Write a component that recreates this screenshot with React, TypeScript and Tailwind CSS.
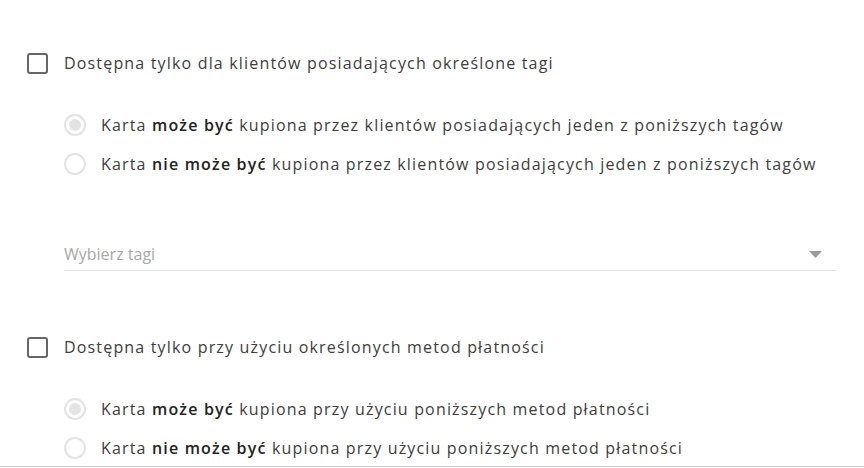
import React, { useState } from 'react';

interface Section {
  label: string;
  options: { pre: string; bold: string; post: string }[];
  withSelect?: boolean;
}

const sections: Section[] = [
  {
    label: 'Dostępna tylko dla klientów posiadających określone tagi',
    options: [
      { pre: 'Karta ', bold: 'może być', post: ' kupiona przez klientów posiadających jeden z poniższych tagów' },
      { pre: 'Karta ', bold: 'nie może być', post: ' kupiona przez klientów posiadających jeden z poniższych tagów' },
    ],
    withSelect: true,
  },
  {
    label: 'Dostępna tylko przy użyciu określonych metod płatności',
    options: [
      { pre: 'Karta ', bold: 'może być', post: ' kupiona przy użyciu poniższych metod płatności' },
      { pre: 'Karta ', bold: 'nie może być', post: ' kupiona przy użyciu poniższych metod płatności' },
    ],
  },
];

function Checkbox({ onChange }: { checked: boolean; onChange: () => void }) {
  return (
    <button
      onClick={onChange}
      className="w-[21px] h-[21px] rounded-[3px] border-2 border-[#666] bg-white flex-shrink-0"
    />
  );
}

function Radio({ checked }: { checked: boolean }) {
  return (
    <span className="w-[22px] h-[22px] rounded-full border-2 border-[#e3e3e3] flex items-center justify-center flex-shrink-0">
      {checked && <span className="w-[12px] h-[12px] rounded-full bg-[#e3e3e3]" />}
    </span>
  );
}

export default function App() {
  const [checked, setChecked] = useState([false, false]);

  return (
    <div
      className="h-[467px] w-[864px] overflow-hidden bg-white border-b border-[#cfcfcf] pl-[27px] pt-[52px] text-[16px] text-[#3d3d3d] tracking-[1.17px]"
      style={{ fontFamily: '"Open Sans", sans-serif' }}
    >
      {sections.map((section, i) => (
        <div key={i} className={i > 0 ? 'mt-[65px]' : ''}>
          {/* Checkbox row */}
          <div className="flex items-center gap-[16px] h-[22px]">
            <Checkbox
              checked={checked[i]}
              onChange={() => setChecked(checked.map((c, j) => (j === i ? !c : c)))}
            />
            <span className="leading-6">{section.label}</span>
          </div>

          {/* Radio options */}
          <div className="ml-[37px] mt-[31px]">
            {section.options.map((opt, k) => (
              <div key={k} className="flex items-center gap-[15px] h-[39px]">
                <Radio checked={k === 0} />
                <span className="leading-6">
                  {opt.pre}
                  <span className="font-semibold text-[#222]">{opt.bold}</span>
                  {opt.post}
                </span>
              </div>
            ))}
          </div>

          {/* Tag select */}
          {section.withSelect && (
            <div className="ml-[37px] mr-[28px] mt-[55px] pt-[4px] pb-[4px] border-b border-[#e3e3e3] flex items-center justify-between">
              <span className="leading-6 text-[16px] tracking-normal text-[#a8a8a8]">Wybierz tagi</span>
              <svg width="13" height="7" viewBox="0 0 13 7" className="mr-[14px]">
                <path d="M0 0h13L6.5 7z" fill="#9a9a9a" />
              </svg>
            </div>
          )}
        </div>
      ))}
    </div>
  );
}
